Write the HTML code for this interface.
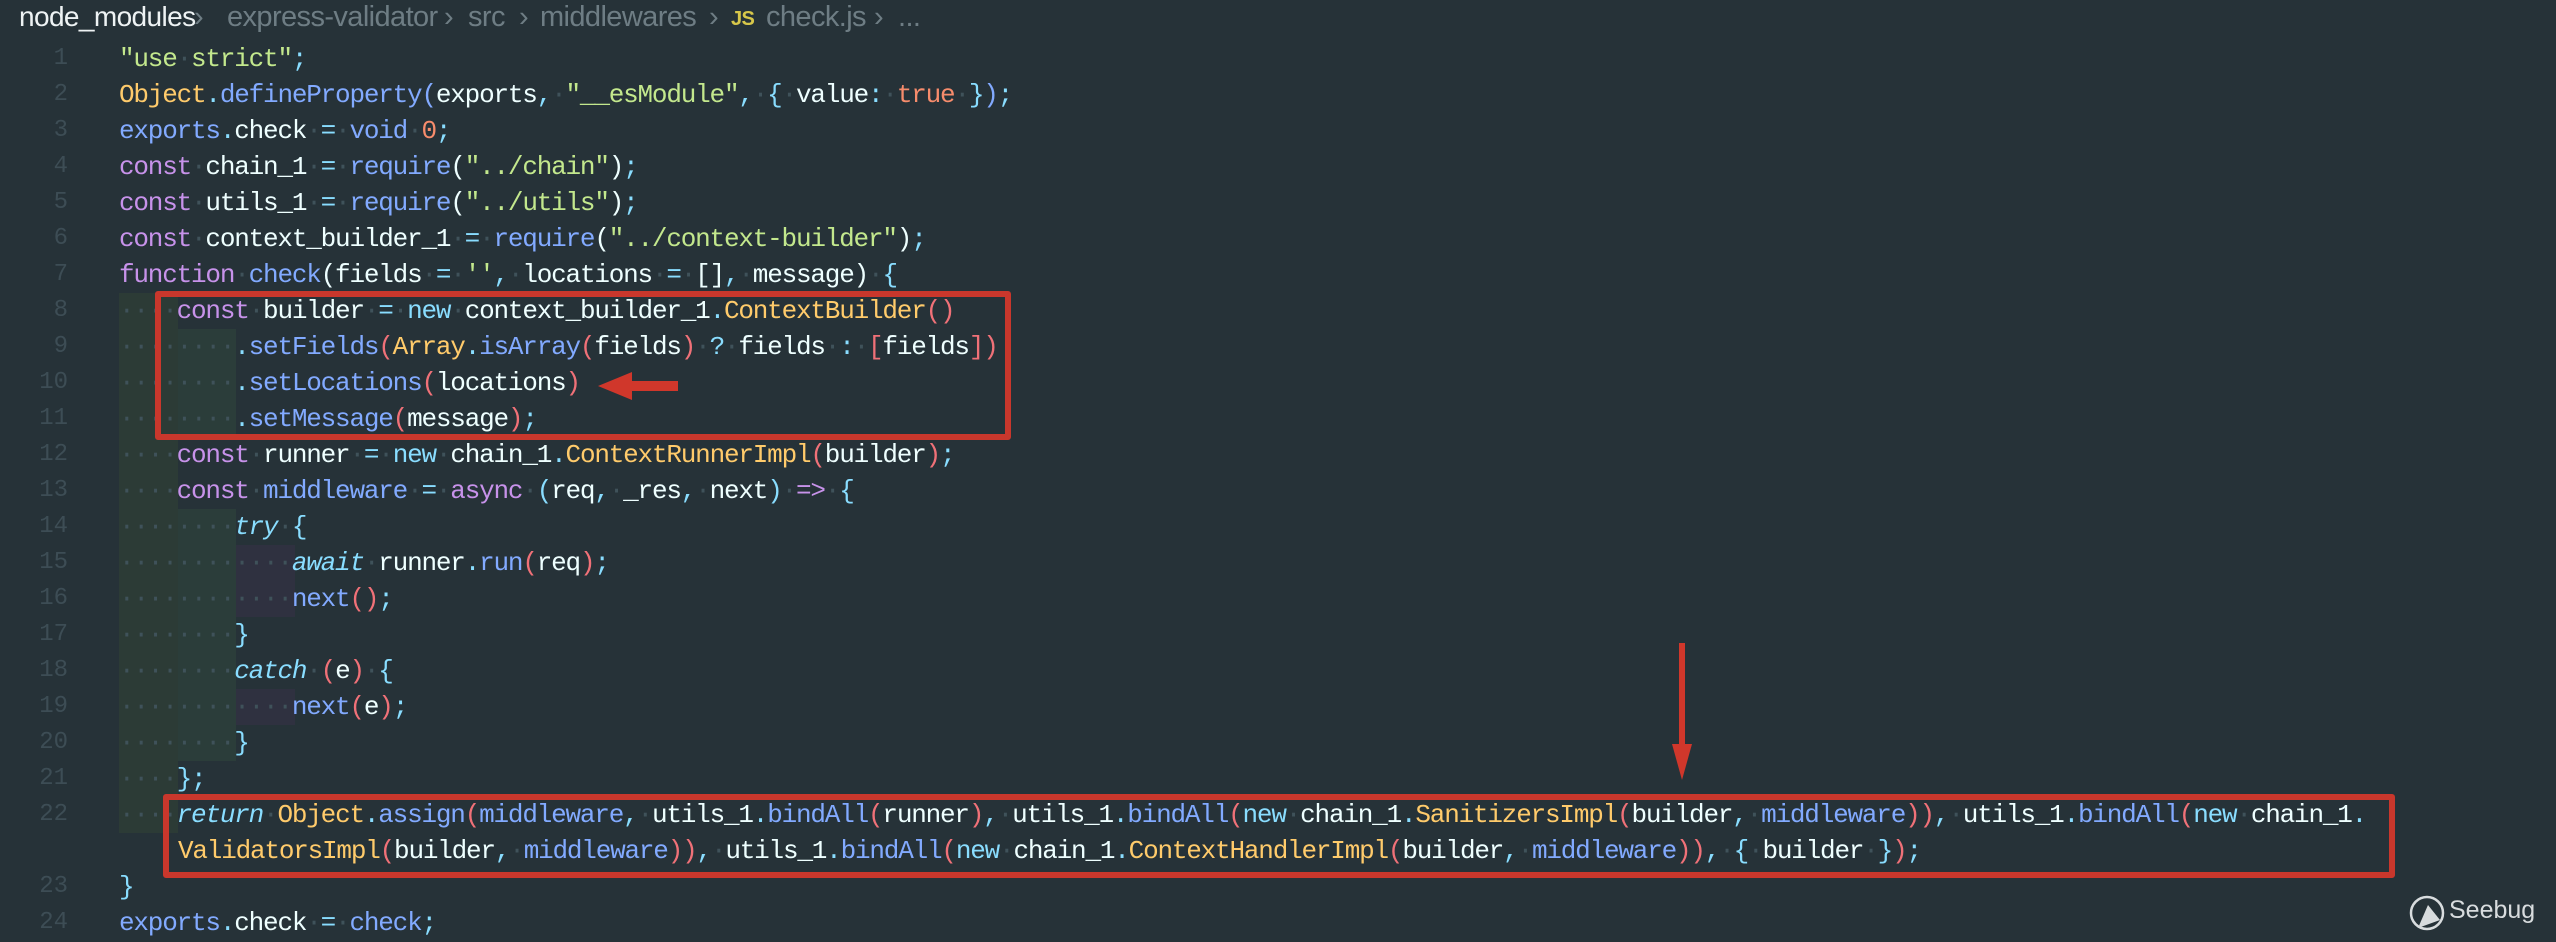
<!DOCTYPE html>
<html><head><meta charset="utf-8"><style>
html,body{margin:0;padding:0;}
body{width:2556px;height:942px;background:#263238;position:relative;overflow:hidden;font-family:"Liberation Mono",monospace;}
.cr{position:absolute;top:1px;font-family:"Liberation Sans",sans-serif;font-size:29px;color:#6e7d84;white-space:pre;letter-spacing:-0.6px;}
.cr.b{color:#eef3f4}
.cr.js{color:#d7c74a;font-weight:bold;font-size:20px;top:8px}
.ln{position:absolute;left:0;width:68px;text-align:right;font-size:24px;color:#3d4d55;height:36px;line-height:36px;}
.l{position:absolute;left:119px;height:36px;line-height:36px;font-size:26px;letter-spacing:-1.2px;white-space:pre;color:#eeffff;}
.d{color:#3f525a;font-style:normal}
.k{color:#c792ea}.f{color:#82aaff}.s{color:#c3e88d}.c{color:#ffcb6b}.n{color:#f78c6c}.p{color:#89ddff}.r{color:#f07178}.it{font-style:italic}
.g{position:absolute;}
.box{position:absolute;border:6px solid #c9372c;border-radius:3px;}
</style></head><body>
<div class="cr b" style="left:19px;font-size:28px">node_modules</div>
<div class="cr" style="left:194px">›</div>
<div class="cr" style="left:227px">express-validator</div>
<div class="cr" style="left:444px">›</div>
<div class="cr" style="left:468px">src</div>
<div class="cr" style="left:519px">›</div>
<div class="cr" style="left:540px">middlewares</div>
<div class="cr" style="left:709px">›</div>
<div class="cr js" style="left:731px">JS</div>
<div class="cr" style="left:766px">check.js</div>
<div class="cr" style="left:874px">›</div>
<div class="cr" style="left:898px">...</div>

<div class="g" style="left:119px;top:293px;width:59px;height:540px;background:#2c3b36"></div>
<div class="g" style="left:178px;top:329px;width:58px;height:108px;background:#2b3d3a"></div>
<div class="g" style="left:178px;top:509px;width:58px;height:252px;background:#2b3d3a"></div>
<div class="g" style="left:236px;top:545px;width:59px;height:72px;background:#2f3140"></div>
<div class="g" style="left:236px;top:689px;width:59px;height:36px;background:#2f3140"></div>

<div class="ln" style="top:41px">1</div><div class="ln" style="top:77px">2</div><div class="ln" style="top:113px">3</div><div class="ln" style="top:149px">4</div><div class="ln" style="top:185px">5</div><div class="ln" style="top:221px">6</div><div class="ln" style="top:257px">7</div><div class="ln" style="top:293px">8</div><div class="ln" style="top:329px">9</div><div class="ln" style="top:365px">10</div><div class="ln" style="top:401px">11</div><div class="ln" style="top:437px">12</div><div class="ln" style="top:473px">13</div><div class="ln" style="top:509px">14</div><div class="ln" style="top:545px">15</div><div class="ln" style="top:581px">16</div><div class="ln" style="top:617px">17</div><div class="ln" style="top:653px">18</div><div class="ln" style="top:689px">19</div><div class="ln" style="top:725px">20</div><div class="ln" style="top:761px">21</div><div class="ln" style="top:797px">22</div><div class="ln" style="top:869px">23</div><div class="ln" style="top:905px">24</div>

<div class="l" style="top:41px"><span class="s">"use<i class="d">·</i>strict"</span><span class="p">;</span></div>
<div class="l" style="top:77px"><span class="c">Object</span><span class="p">.</span><span class="f">defineProperty</span><span class="f">(</span>exports<span class="p">,</span><i class="d">·</i><span class="s">"__esModule"</span><span class="p">,</span><i class="d">·</i><span class="p">{</span><i class="d">·</i>value<span class="p">:</span><i class="d">·</i><span class="n">true</span><i class="d">·</i><span class="p">}</span><span class="f">)</span><span class="p">;</span></div>
<div class="l" style="top:113px"><span class="f">exports</span><span class="p">.</span>check<i class="d">·</i><span class="p">=</span><i class="d">·</i><span class="f">void</span><i class="d">·</i><span class="n">0</span><span class="p">;</span></div>
<div class="l" style="top:149px"><span class="k">const</span><i class="d">·</i>chain_1<i class="d">·</i><span class="p">=</span><i class="d">·</i><span class="f">require</span>(<span class="s">"../chain"</span>)<span class="p">;</span></div>
<div class="l" style="top:185px"><span class="k">const</span><i class="d">·</i>utils_1<i class="d">·</i><span class="p">=</span><i class="d">·</i><span class="f">require</span>(<span class="s">"../utils"</span>)<span class="p">;</span></div>
<div class="l" style="top:221px"><span class="k">const</span><i class="d">·</i>context_builder_1<i class="d">·</i><span class="p">=</span><i class="d">·</i><span class="f">require</span>(<span class="s">"../context-builder"</span>)<span class="p">;</span></div>
<div class="l" style="top:257px"><span class="k">function</span><i class="d">·</i><span class="f">check</span>(fields<i class="d">·</i><span class="p">=</span><i class="d">·</i><span class="s">''</span><span class="p">,</span><i class="d">·</i>locations<i class="d">·</i><span class="p">=</span><i class="d">·</i>[]<span class="p">,</span><i class="d">·</i>message)<i class="d">·</i><span class="p">{</span></div>
<div class="l" style="top:293px"><i class="d">····</i><span class="k">const</span><i class="d">·</i>builder<i class="d">·</i><span class="p">=</span><i class="d">·</i><span class="p">new</span><i class="d">·</i>context_builder_1<span class="p">.</span><span class="c">ContextBuilder</span><span class="r">()</span></div>
<div class="l" style="top:329px"><i class="d">········</i><span class="p">.</span><span class="f">setFields</span><span class="r">(</span><span class="c">Array</span><span class="p">.</span><span class="f">isArray</span><span class="r">(</span>fields<span class="r">)</span><i class="d">·</i><span class="p">?</span><i class="d">·</i>fields<i class="d">·</i><span class="p">:</span><i class="d">·</i><span class="r">[</span>fields<span class="r">])</span></div>
<div class="l" style="top:365px"><i class="d">········</i><span class="p">.</span><span class="f">setLocations</span><span class="r">(</span>locations<span class="r">)</span></div>
<div class="l" style="top:401px"><i class="d">········</i><span class="p">.</span><span class="f">setMessage</span><span class="r">(</span>message<span class="r">)</span><span class="p">;</span></div>
<div class="l" style="top:437px"><i class="d">····</i><span class="k">const</span><i class="d">·</i>runner<i class="d">·</i><span class="p">=</span><i class="d">·</i><span class="p">new</span><i class="d">·</i>chain_1<span class="p">.</span><span class="c">ContextRunnerImpl</span><span class="r">(</span>builder<span class="r">)</span><span class="p">;</span></div>
<div class="l" style="top:473px"><i class="d">····</i><span class="k">const</span><i class="d">·</i><span class="f">middleware</span><i class="d">·</i><span class="p">=</span><i class="d">·</i><span class="k">async</span><i class="d">·</i><span class="p">(</span>req<span class="p">,</span><i class="d">·</i>_res<span class="p">,</span><i class="d">·</i>next<span class="p">)</span><i class="d">·</i><span class="k">=&gt;</span><i class="d">·</i><span class="p">{</span></div>
<div class="l" style="top:509px"><i class="d">········</i><span class="p it">try</span><i class="d">·</i><span class="p">{</span></div>
<div class="l" style="top:545px"><i class="d">············</i><span class="p it">await</span><i class="d">·</i>runner<span class="p">.</span><span class="f">run</span><span class="r">(</span>req<span class="r">)</span><span class="p">;</span></div>
<div class="l" style="top:581px"><i class="d">············</i><span class="f">next</span><span class="r">()</span><span class="p">;</span></div>
<div class="l" style="top:617px"><i class="d">········</i><span class="p">}</span></div>
<div class="l" style="top:653px"><i class="d">········</i><span class="p it">catch</span><i class="d">·</i><span class="r">(</span>e<span class="r">)</span><i class="d">·</i><span class="p">{</span></div>
<div class="l" style="top:689px"><i class="d">············</i><span class="f">next</span><span class="r">(</span>e<span class="r">)</span><span class="p">;</span></div>
<div class="l" style="top:725px"><i class="d">········</i><span class="p">}</span></div>
<div class="l" style="top:761px"><i class="d">····</i><span class="p">};</span></div>
<div class="l" style="top:797px"><i class="d">····</i><span class="p it">return</span><i class="d">·</i><span class="c">Object</span><span class="p">.</span><span class="f">assign</span><span class="r">(</span><span class="f">middleware</span><span class="p">,</span><i class="d">·</i>utils_1<span class="p">.</span><span class="f">bindAll</span><span class="r">(</span>runner<span class="r">)</span><span class="p">,</span><i class="d">·</i>utils_1<span class="p">.</span><span class="f">bindAll</span><span class="r">(</span><span class="p">new</span><i class="d">·</i>chain_1<span class="p">.</span><span class="c">SanitizersImpl</span><span class="r">(</span>builder<span class="p">,</span><i class="d">·</i><span class="f">middleware</span><span class="r">))</span><span class="p">,</span><i class="d">·</i>utils_1<span class="p">.</span><span class="f">bindAll</span><span class="r">(</span><span class="p">new</span><i class="d">·</i>chain_1<span class="p">.</span></div>
<div class="l" style="top:833px;left:178px"><span class="c">ValidatorsImpl</span><span class="r">(</span>builder<span class="p">,</span><i class="d">·</i><span class="f">middleware</span><span class="r">))</span><span class="p">,</span><i class="d">·</i>utils_1<span class="p">.</span><span class="f">bindAll</span><span class="r">(</span><span class="p">new</span><i class="d">·</i>chain_1<span class="p">.</span><span class="c">ContextHandlerImpl</span><span class="r">(</span>builder<span class="p">,</span><i class="d">·</i><span class="f">middleware</span><span class="r">))</span><span class="p">,</span><i class="d">·</i><span class="p">{</span><i class="d">·</i>builder<i class="d">·</i><span class="p">}</span><span class="r">)</span><span class="p">;</span></div>
<div class="l" style="top:869px"><span class="p">}</span></div>
<div class="l" style="top:905px"><span class="f">exports</span><span class="p">.</span>check<i class="d">·</i><span class="p">=</span><i class="d">·</i><span class="f">check</span><span class="p">;</span></div>

<div class="box" style="left:155px;top:291px;width:844px;height:137px"></div>
<div class="box" style="left:163px;top:794px;width:2220px;height:72px"></div>

<svg style="position:absolute;left:0;top:0" width="2556" height="942">
 <polygon points="598,386 632,372 632,381 678,381 678,391 632,391 632,400" fill="#d0372b"/>
 <rect x="1679" y="643" width="6" height="103" fill="#d0372b"/>
 <polygon points="1672,744 1692,744 1682,780" fill="#d0372b"/>
 <circle cx="2427" cy="913" r="16" fill="none" stroke="#d8dcde" stroke-width="2.5"/>
 <path d="M2418,928 L2428,905 L2440,920 Z" fill="#d8dcde"/>
</svg>
<div style="position:absolute;left:2449px;top:896px;font-family:'Liberation Sans',sans-serif;font-size:25px;color:#d8dcde;">Seebug</div>
</body></html>
